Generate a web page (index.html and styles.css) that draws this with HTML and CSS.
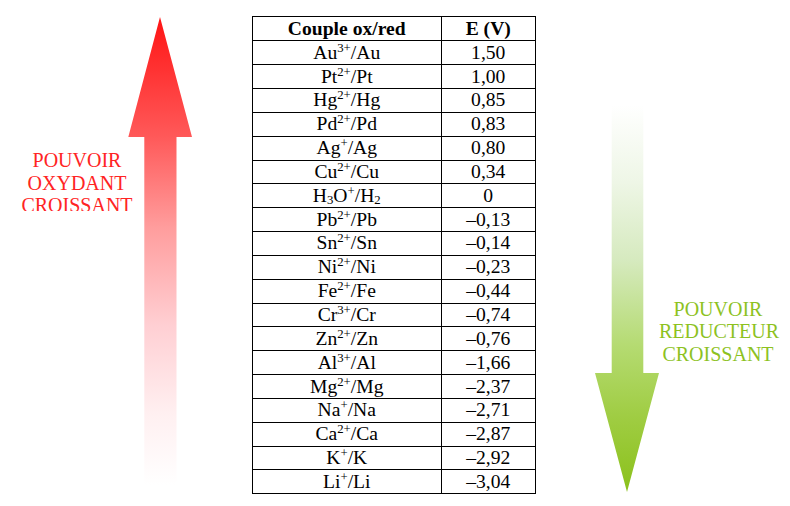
FILE: index.html
```html
<!DOCTYPE html>
<html lang="fr">
<head>
<meta charset="utf-8">
<title>Couples ox/red</title>
<link rel="stylesheet" href="styles.css">
</head>
<body>
<div class="stage">
  <div class="side side-left">
    <div class="label label-ox">POUVOIR<br>OXYDANT<br>CROISSANT</div>
    <svg class="arrow arrow-up" width="64" height="490" viewBox="0 0 64 490">
      <defs>
        <linearGradient id="gRed" gradientUnits="userSpaceOnUse" x1="0" y1="17" x2="0" y2="485">
          <stop offset="0" stop-color="#ff1414"/>
          <stop offset="0.256" stop-color="#ff5959"/>
          <stop offset="0.45" stop-color="#ff9d9d"/>
          <stop offset="0.66" stop-color="#ffcfd3"/>
          <stop offset="0.85" stop-color="#fff0f1"/>
          <stop offset="1" stop-color="#ffffff"/>
        </linearGradient>
      </defs>
      <path d="M32 17 L64 137 L48.5 137 L48.5 486 L16.3 486 L16.3 137 L0.3 137 Z" fill="url(#gRed)"/>
    </svg>
  </div>

  <table class="redox">
    <thead>
      <tr><th>Couple ox/red</th><th>E (V)</th></tr>
    </thead>
    <tbody>
      <tr><td>Au<sup>3+</sup>/Au</td><td>1,50</td></tr>
      <tr><td>Pt<sup>2+</sup>/Pt</td><td>1,00</td></tr>
      <tr><td>Hg<sup>2+</sup>/Hg</td><td>0,85</td></tr>
      <tr><td>Pd<sup>2+</sup>/Pd</td><td>0,83</td></tr>
      <tr><td>Ag<sup>+</sup>/Ag</td><td>0,80</td></tr>
      <tr><td>Cu<sup>2+</sup>/Cu</td><td>0,34</td></tr>
      <tr><td>H<sub>3</sub>O<sup>+</sup>/H<sub>2</sub></td><td>0</td></tr>
      <tr><td>Pb<sup>2+</sup>/Pb</td><td>–0,13</td></tr>
      <tr><td>Sn<sup>2+</sup>/Sn</td><td>–0,14</td></tr>
      <tr><td>Ni<sup>2+</sup>/Ni</td><td>–0,23</td></tr>
      <tr><td>Fe<sup>2+</sup>/Fe</td><td>–0,44</td></tr>
      <tr><td>Cr<sup>3+</sup>/Cr</td><td>–0,74</td></tr>
      <tr><td>Zn<sup>2+</sup>/Zn</td><td>–0,76</td></tr>
      <tr><td>Al<sup>3+</sup>/Al</td><td>–1,66</td></tr>
      <tr><td>Mg<sup>2+</sup>/Mg</td><td>–2,37</td></tr>
      <tr><td>Na<sup>+</sup>/Na</td><td>–2,71</td></tr>
      <tr><td>Ca<sup>2+</sup>/Ca</td><td>–2,87</td></tr>
      <tr><td>K<sup>+</sup>/K</td><td>–2,92</td></tr>
      <tr><td>Li<sup>+</sup>/Li</td><td>–3,04</td></tr>
    </tbody>
  </table>

  <div class="side side-right">
    <svg class="arrow arrow-down" width="64" height="500" viewBox="0 0 64 500">
      <defs>
        <linearGradient id="gGreen" gradientUnits="userSpaceOnUse" x1="0" y1="105" x2="0" y2="492">
          <stop offset="0" stop-color="#ffffff"/>
          <stop offset="0.2" stop-color="#eef6e6"/>
          <stop offset="0.4" stop-color="#d6eabf"/>
          <stop offset="0.62" stop-color="#b5db72"/>
          <stop offset="0.8" stop-color="#a0cd44"/>
          <stop offset="1" stop-color="#8bc11b"/>
        </linearGradient>
      </defs>
      <path d="M16.7 105 L48.3 105 L48.3 373 L64 373 L32 492 L0 373 L16.7 373 Z" fill="url(#gGreen)"/>
    </svg>
    <div class="label label-red">POUVOIR<br>REDUCTEUR<br>CROISSANT</div>
  </div>
</div>
</body>
</html>
```

FILE: styles.css
```css
html, body {
  margin: 0;
  padding: 0;
  background: #ffffff;
}

.stage {
  width: 790px;
  height: 506px;
  display: flex;
  align-items: flex-start;
  overflow: hidden;
  font-family: "Liberation Serif", "Times New Roman", serif;
}

.side {
  display: flex;
  align-items: flex-start;
  flex-shrink: 0;
  box-sizing: border-box;
}

.side-left {
  width: 252px;
  padding-left: 12px;
}

.side-right {
  padding-left: 59px;
}

.arrow {
  display: block;
  flex-shrink: 0;
}

.side-left .arrow {
  margin-left: -14px;
}

.label {
  font-size: 20px;
  text-align: center;
  white-space: nowrap;
}

.label-ox {
  width: 130px;
  margin-top: 149px;
  line-height: 22.7px;
  height: 62px;
  overflow: hidden;
  color: #ff2424;
  position: relative;
  z-index: 1;
}

.label-red {
  width: 118px;
  margin-top: 297.5px;
  line-height: 22.5px;
  color: #8dc21f;
}

.redox {
  flex-shrink: 0;
  margin-top: 16px;
  border-collapse: collapse;
  font-size: 19.6px;
  color: #000;
  width: 284px;
}

.redox th,
.redox td {
  border: 1px solid #000;
  padding: 0;
  height: 22.85px;
  text-align: center;
  vertical-align: middle;
  line-height: 22px;
  white-space: nowrap;
}

.redox th {
  font-weight: bold;
  height: 23.3px;
}

.redox th:first-child,
.redox td:first-child {
  width: 187.5px;
}

.redox sup {
  font-size: 0.65em;
  line-height: 0;
  vertical-align: 0.58em;
}

.redox sub {
  font-size: 0.65em;
  line-height: 0;
  vertical-align: -0.12em;
}
```
